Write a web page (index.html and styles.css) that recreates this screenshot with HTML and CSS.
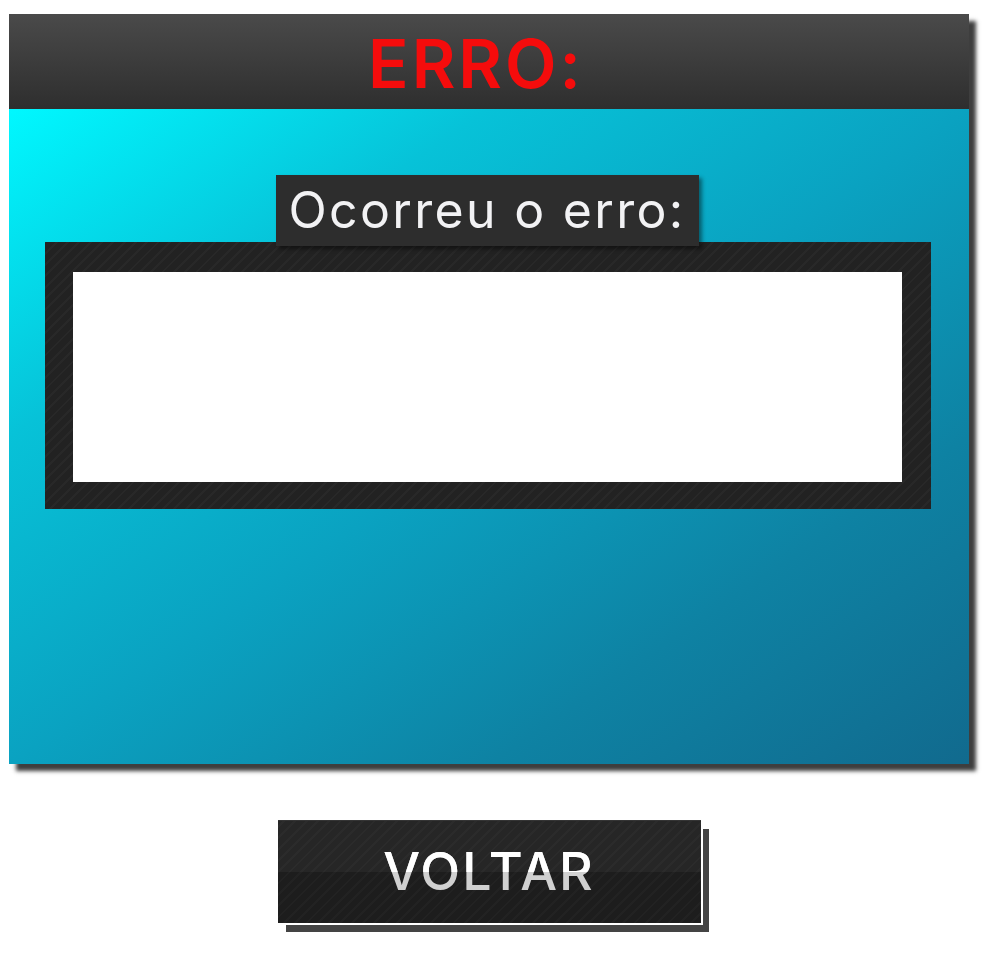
FILE: index.html
```html
<!DOCTYPE html>
<html lang="pt">
<head>
<meta charset="utf-8">
<title>Erro</title>
<link rel="stylesheet" href="styles.css">
</head>
<body>
<div class="page">
  <section class="dialog">
    <header class="dialog-header">
      <h1 class="dialog-title">ERRO:</h1>
    </header>
    <div class="dialog-body">
      <div class="label">Ocorreu o erro:</div>
      <div class="panel">
        <div class="message"></div>
      </div>
    </div>
  </section>
  <div class="actions">
    <button class="btn-back" type="button"><span class="btn-text" data-text="VOLTAR">VOLTAR</span></button>
  </div>
</div>
</body>
</html>
```
FILE: styles.css
```css
html, body {
  margin: 0;
  padding: 0;
  background: #ffffff;
}
body {
  font-family: "Inter", "Noto Sans", sans-serif;
}
.page {
  padding: 14px 0 30px 9px;
  width: 960px;
}
.dialog {
  width: 960px;
  height: 750px;
  display: flex;
  flex-direction: column;
  box-shadow: 7px 7px 4px #3e3e3e;
}
.dialog-header {
  height: 95px;
  flex: none;
  background: linear-gradient(to bottom, #4a4a4a 0%, #2e2e2e 100%);
  display: flex;
  align-items: center;
  justify-content: center;
}
.dialog-title {
  margin: 4px 0 0 0;
  padding-right: 26px;
  color: #f50c0c;
  font-size: 67px;
  font-weight: 600;
  line-height: 1;
  letter-spacing: 3px;
}
.dialog-body {
  flex: 1;
  background: linear-gradient(to bottom right, #00f8ff 0%, #07c2d8 25%, #0aa2c1 50%, #0e82a3 75%, #116a8e 100%);
  display: flex;
  flex-direction: column;
  align-items: center;
  padding-top: 66px;
}
.label {
  position: relative;
  z-index: 1;
  background: #2d2d2d;
  color: #f2f2f4;
  font-size: 50px;
  font-weight: 400;
  line-height: 71px;
  height: 71px;
  width: 423px;
  text-align: center;
  margin-left: -4px;
  box-shadow: 3px 3px 4px rgba(0, 0, 0, 0.45);
  letter-spacing: 2.3px;
}
.panel {
  margin-top: -4px;
  margin-left: -3px;
  width: 829px;
  padding: 30px 29px 27px 28px;
  background: repeating-linear-gradient(-45deg, #222222 0px, #222222 6px, #282828 6px, #282828 8px);
}
.message {
  height: 210px;
  background: #ffffff;
}
.actions {
  display: flex;
  justify-content: center;
  padding-top: 56px;
}
.btn-back {
  width: 423px;
  height: 103px;
  border: 0;
  border-top: 1px solid #343434;
  padding: 0;
  background:
    repeating-linear-gradient(-45deg, rgba(255,255,255,0) 0px, rgba(255,255,255,0) 6px, rgba(255,255,255,0.025) 6px, rgba(255,255,255,0.025) 8px),
    linear-gradient(to bottom, #262626 0%, #262626 50%, #1d1d1d 50%, #1d1d1d 100%);
  box-shadow: 2px 2px 0 #ffffff, 8px 9px 0 #444444;
  cursor: pointer;
  font-family: "Inter", "Noto Sans", sans-serif;
}
.btn-text {
  display: inline-block;
  font-size: 52px;
  font-weight: 500;
  line-height: 1;
  letter-spacing: 2px;
  color: #d0d0d0;
  position: relative;
}
.btn-text::before {
  content: attr(data-text);
  position: absolute;
  left: 0;
  top: 0;
  height: 50%;
  overflow: hidden;
  color: #ffffff;
}
```
